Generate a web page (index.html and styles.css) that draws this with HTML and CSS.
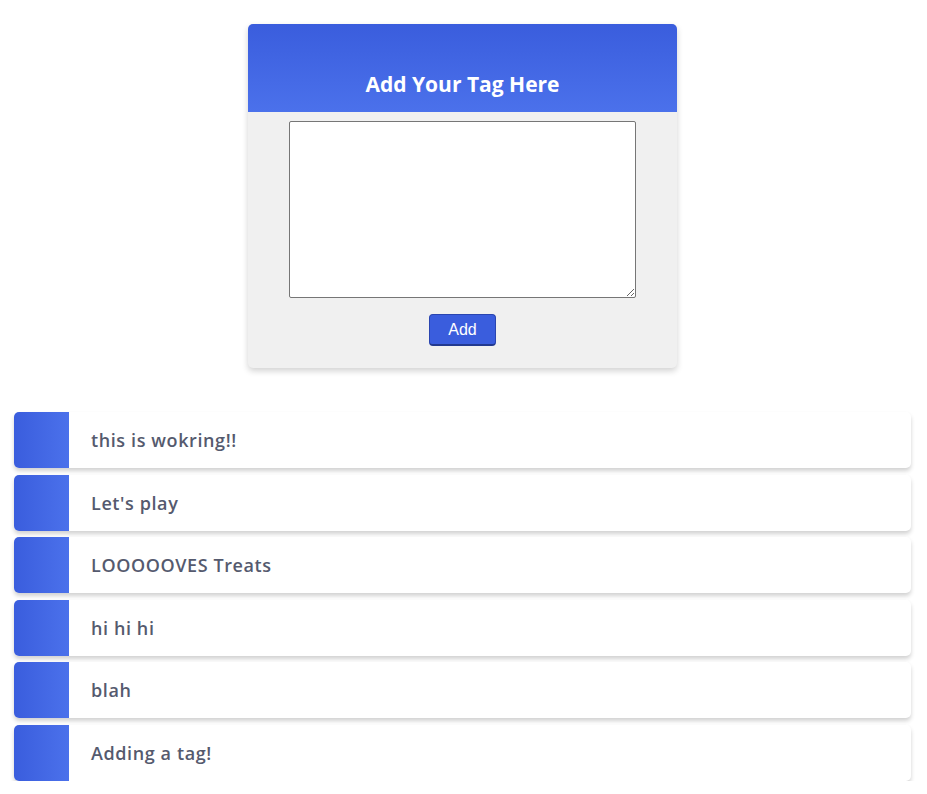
FILE: index.html
```html
<!DOCTYPE html>
<html>
<head>
<meta charset="utf-8">
<link rel="stylesheet" href="styles.css">
</head>
<body>
<div class="page">
  <div class="card">
    <div class="card-head"><h2>Add Your Tag Here</h2></div>
    <div class="card-body">
      <textarea class="tag-input"></textarea>
      <button class="add-btn">Add</button>
    </div>
  </div>
  <ul class="tags">
    <li class="tag"><span class="tag-mark"></span><span class="tag-text">this is wokring!!</span></li>
    <li class="tag"><span class="tag-mark"></span><span class="tag-text">Let's play</span></li>
    <li class="tag"><span class="tag-mark"></span><span class="tag-text">LOOOOOVES Treats</span></li>
    <li class="tag"><span class="tag-mark"></span><span class="tag-text">hi hi hi</span></li>
    <li class="tag"><span class="tag-mark"></span><span class="tag-text">blah</span></li>
    <li class="tag"><span class="tag-mark"></span><span class="tag-text">Adding a tag!</span></li>
  </ul>
</div>
</body>
</html>
```
FILE: styles.css
```css
html, body { margin: 0; padding: 0; background: #fff; }
body { font-family: "Open Sans", Lato, sans-serif; }
.page { padding: 24px 16px 0 14px; display: flex; flex-direction: column; align-items: center; }
.card {
  width: 429px;
  border-radius: 5px;
  overflow: hidden;
  background: #f0f0f0;
  box-shadow: 0 3px 6px rgba(0,0,0,0.18);
}
.card-head {
  height: 88px;
  background: linear-gradient(to bottom, #3a5ddd, #4b71eb);
  display: flex;
  align-items: flex-end;
  justify-content: center;
}
.card-head h2 {
  margin: 0 0 14px;
  color: #fff;
  font-size: 21px;
  font-weight: 700;
}
.card-body {
  display: flex;
  flex-direction: column;
  align-items: center;
  padding: 9px 0 22px;
}
.tag-input {
  width: 347px;
  height: 177px;
  box-sizing: border-box;
  border: 1px solid #767676;
  border-radius: 2px;
  background: #fff;
  margin: 0;
}
.add-btn {
  margin-top: 16px;
  width: 67px;
  height: 32px;
  background: #3a5ddd;
  color: #fff;
  border: 1px solid #2a45b0;
  border-bottom: 2px solid #22398f;
  border-radius: 4px;
  font-family: "Liberation Sans", Arial, sans-serif;
  font-size: 16px;
}
.tags {
  list-style: none;
  margin: 44px 0 0;
  padding: 0;
  width: 897px;
  display: flex;
  flex-direction: column;
  gap: 6.5px;
}
.tag {
  height: 56px;
  display: flex;
  align-items: center;
  background: #fff;
  border-radius: 5px;
  overflow: hidden;
  box-shadow: 0 3px 4px rgba(0,0,0,0.18);
}
.tag-mark {
  width: 55px;
  align-self: stretch;
  background: linear-gradient(to right, #3a5ddd, #4b71eb);
}
.tag-text {
  margin-left: 22px;
  font-size: 18px;
  font-weight: 600;
  color: #555a6e;
  letter-spacing: 0.6px;
}
```
